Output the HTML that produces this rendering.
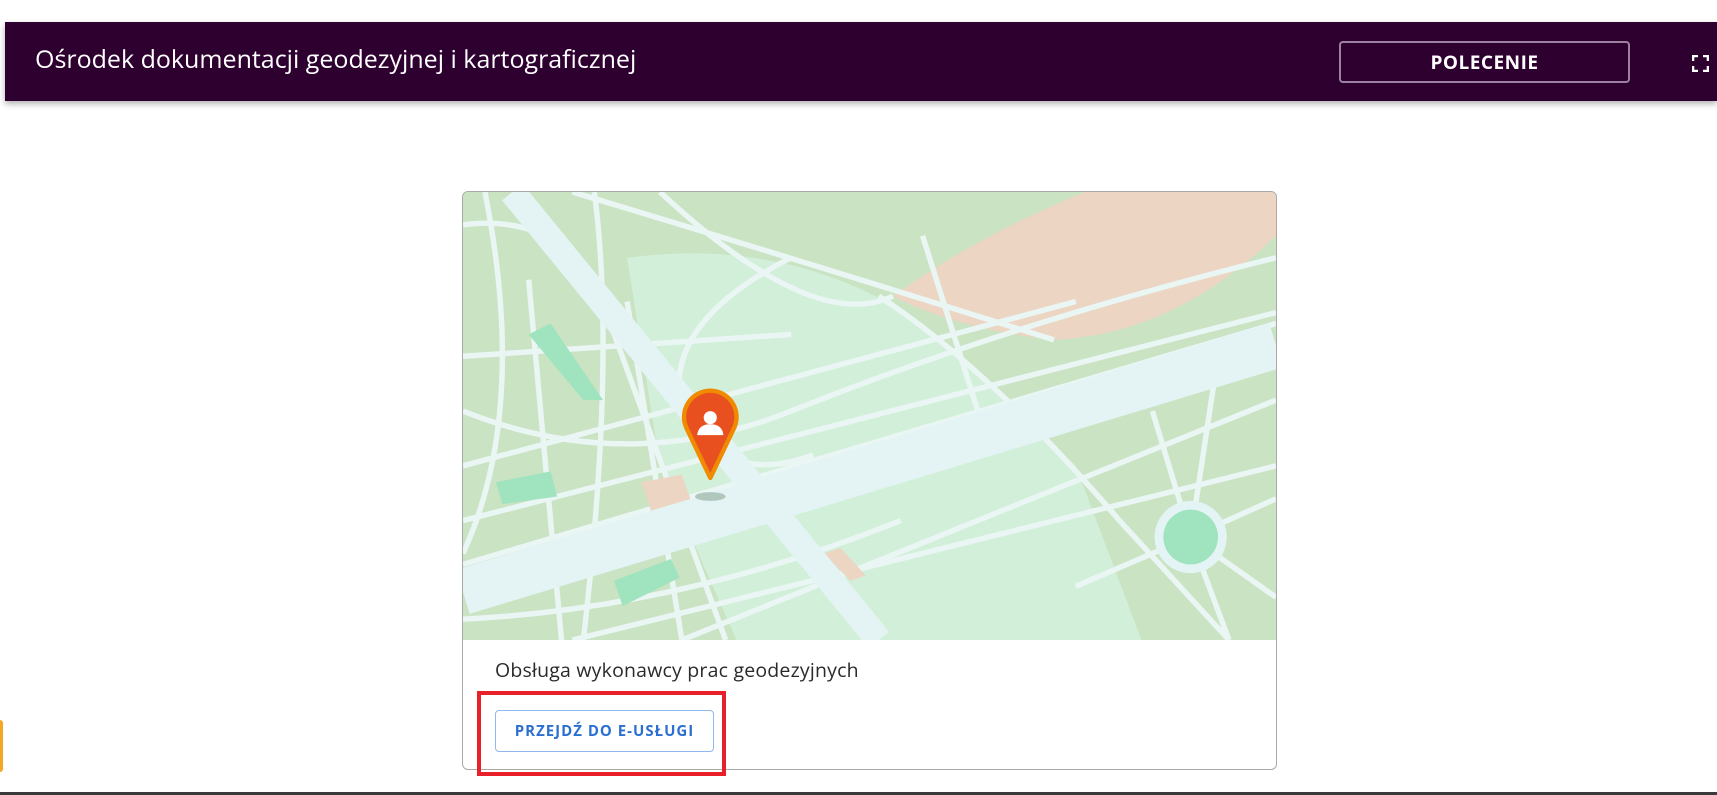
<!DOCTYPE html>
<html><head><meta charset="utf-8"><style>
html,body{margin:0;padding:0;width:1717px;height:795px;overflow:hidden;background:#fff;font-family:"Open Sans","Liberation Sans",sans-serif;position:relative}
.hdr{position:absolute;left:5px;top:22px;width:1712px;height:79px;background:#2d0030;box-shadow:0 3px 6px rgba(0,0,0,.3)}
.title{position:absolute;left:30px;top:22px;color:#fff;font-size:25px;line-height:30px;letter-spacing:0px}
.btn{position:absolute;left:1334px;top:19px;width:287px;height:38px;border:2px solid #9c829f;border-radius:4px;color:#fff;font-weight:bold;font-size:19px;text-align:center;line-height:38px;letter-spacing:0.5px}
.fs{position:absolute;left:1687px;top:33px;width:17px;height:17px}
.card{position:absolute;left:462px;top:191px;width:813px;height:577px;border:1px solid #a9a9a9;border-radius:6px;overflow:hidden;background:#fff}
.map{position:absolute;left:0;top:0;width:813px;height:448px}
.desc{position:absolute;left:32px;top:464px;font-size:19.5px;color:#2a2a2a;letter-spacing:0.2px}
.go{position:absolute;left:32px;top:518px;width:217px;height:40px;border:1px solid #8fb8ee;border-radius:4px;color:#2b6fd0;font-weight:bold;font-size:15px;text-align:center;line-height:40px;letter-spacing:1px}
.red{position:absolute;left:477px;top:691px;width:241px;height:77px;border:4px solid #e8202a}
.bl{position:absolute;left:0;top:792px;width:1717px;height:3px;background:#3a3a3a}
.or{position:absolute;left:0;top:720px;width:3px;height:52px;background:#f5a623;border-radius:0 3px 3px 0}
</style></head><body>
<div class="hdr"><div class="title">Ośrodek dokumentacji geodezyjnej i kartograficznej</div>
<div class="btn">POLECENIE</div>
<svg class="fs" viewBox="0 0 17 17" fill="none" stroke="#fff" stroke-width="2.6"><path d="M1 6V1h5M11 1h5v5M16 11v5h-5M6 16H1v-5"/></svg></div>
<div class="card">
<svg class="map" viewBox="0 0 743 409" preserveAspectRatio="none">
<rect width="743" height="409" fill="#c9e3c3"/>
<path d="M150 60 Q300 40 420 120 L560 250 L620 409 L250 409 L180 250Z" fill="#d2efd9"/>
<path d="M568 0 L743 0 L743 40 Q650 130 540 135 Q450 125 393 95 Q470 40 568 0Z" fill="#ecd5c2"/>
<g stroke="#eaf6f4" stroke-width="5" fill="none">
<path d="M0 30 Q80 20 120 80 L240 409"/>
<path d="M20 0 Q60 200 0 330"/>
<path d="M120 0 Q140 150 110 409"/>
<path d="M180 0 Q320 130 393 95"/>
<path d="M100 0 Q300 60 540 135"/>
<path d="M300 60 Q180 120 200 200 Q240 270 320 240"/>
<path d="M380 95 Q480 160 600 300 L700 409"/>
<path d="M0 200 Q150 260 300 200 Q500 120 743 60"/>
<path d="M0 300 L743 110"/>
<path d="M0 250 L560 100"/>
<path d="M0 340 L743 120"/>
<path d="M100 409 L743 250"/>
<path d="M200 409 L743 190"/>
<path d="M0 390 Q200 380 400 300"/>
<path d="M420 40 L480 230"/>
<path d="M60 80 L90 409"/>
<path d="M665 315 L743 280 M665 315 L743 370 M665 315 L700 409 M665 315 L560 360 M665 315 L630 200 M665 315 L690 150"/>
<path d="M150 100 L200 409"/>
<path d="M0 150 L300 130"/>
</g>
<polygon points="60,130 80,120 128,190 110,190" fill="#9fe3bf"/>
<polygon points="30,265 80,255 86,278 36,285" fill="#9fe3bf"/>
<polygon points="138,355 190,335 198,352 146,378" fill="#9fe3bf"/>
<polygon points="163,265 200,258 212,292 175,300" fill="#ecd5c2"/>
<polygon points="330,330 345,325 368,350 354,355" fill="#ecd5c2"/>
<path d="M0 365 L743 140" stroke="#e4f4f5" stroke-width="42"/>
<path d="M45 0 L380 409" stroke="#e4f4f5" stroke-width="24"/>
<circle cx="665" cy="315" r="33" fill="#e4f4f5"/>
<circle cx="665" cy="315" r="25" fill="#9fe3bf"/>
<ellipse cx="226" cy="278" rx="14" ry="4" fill="#7a9a86" opacity=".5"/>
<path d="M226 261 L204 215 A24 24 0 1 1 248 215Z" fill="#e85020" stroke="#f08a00" stroke-width="4" stroke-linejoin="round"/>
<circle cx="226" cy="206" r="6" fill="#fff"/>
<path d="M214 222 Q215 212 226 212 Q237 212 238 222Z" fill="#fff"/>
</svg>
<div class="desc">Obsługa wykonawcy prac geodezyjnych</div>
<div class="go">PRZEJDŹ DO E-USŁUGI</div>
</div>
<div class="red"></div>
<div class="or"></div>
<div class="bl"></div>
</body></html>
